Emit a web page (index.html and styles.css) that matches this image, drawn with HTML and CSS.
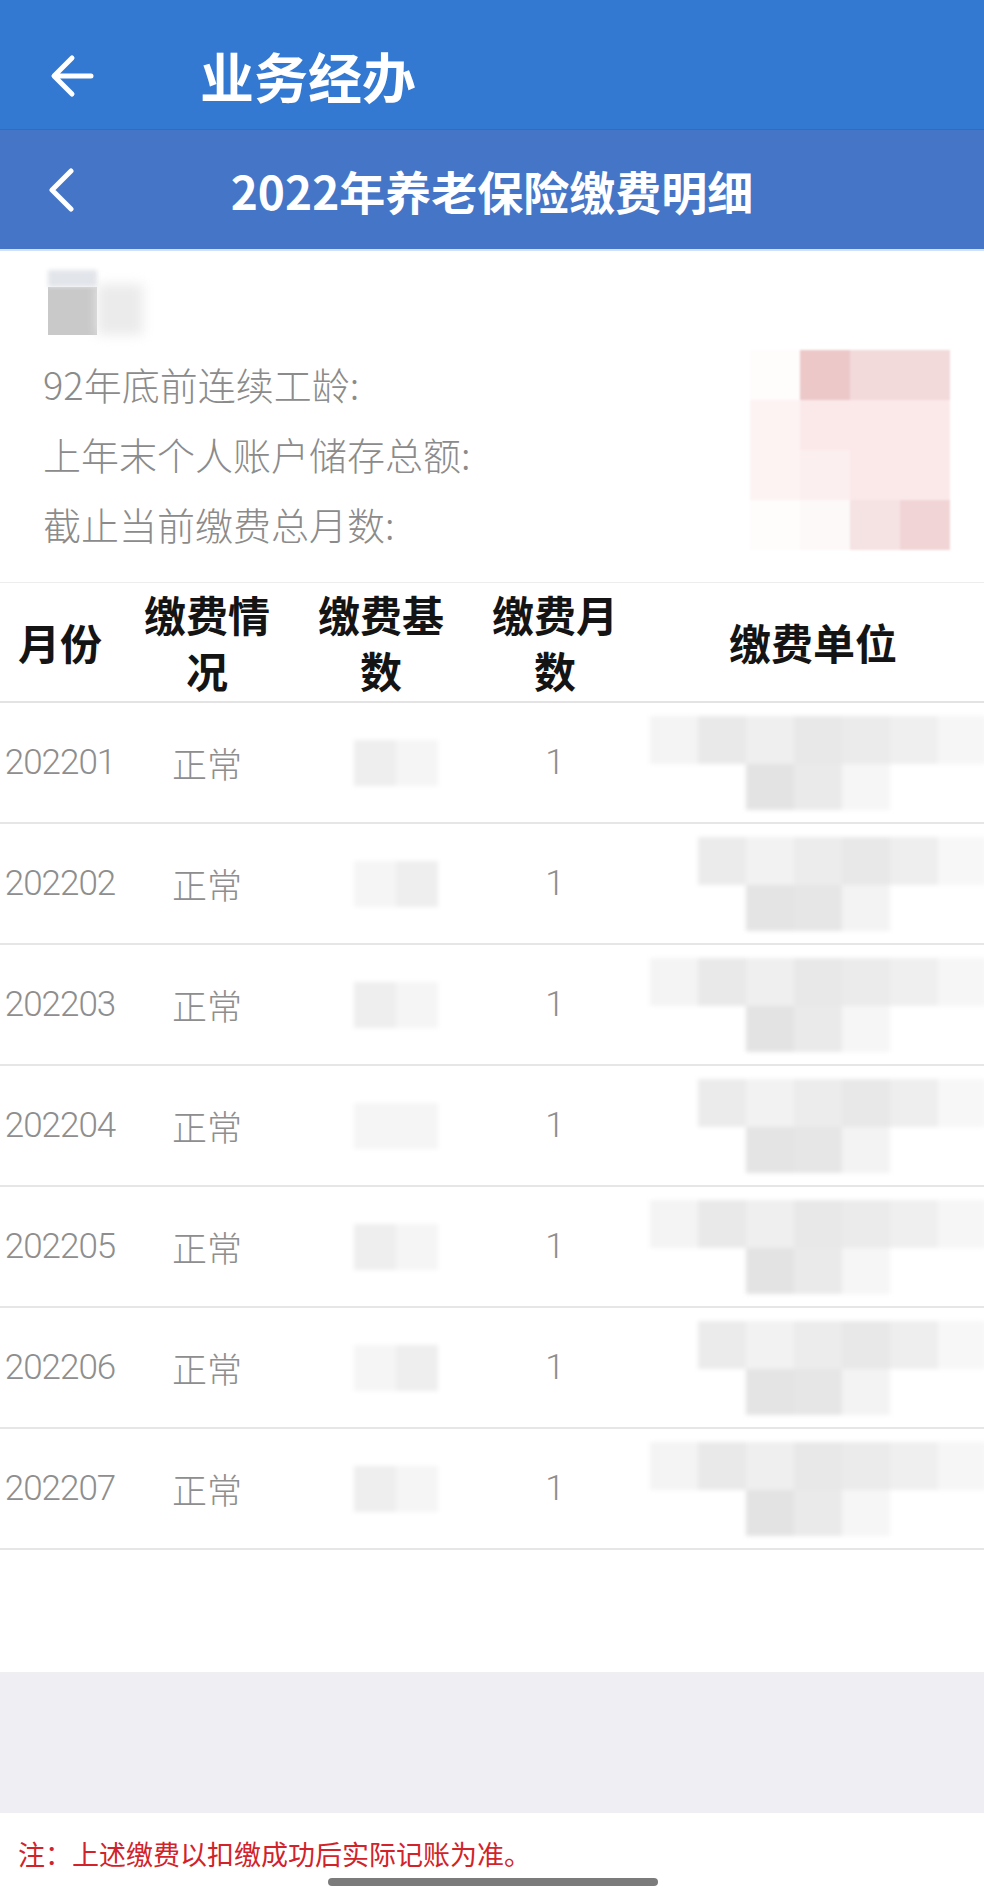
FILE: index.html
```html
<!DOCTYPE html>
<html lang="zh-CN">
<head>
<meta charset="utf-8">
<title>2022年养老保险缴费明细</title>
<link rel="stylesheet" href="styles.css">
</head>
<body>
<div class="page">
  <header class="appbar">
    <svg class="back-arrow" viewBox="0 0 44 44" width="44" height="44">
      <path d="M41 22 H5 M22 4 L4 22 L22 40" fill="none" stroke="#fff" stroke-width="5" stroke-linecap="round" stroke-linejoin="round"/>
    </svg>
    <h1 class="app-title">业务经办</h1>
  </header>

  <div class="subbar">
    <svg class="chevron" viewBox="0 0 26 44" width="26" height="44">
      <path d="M23 3 L4 22 L23 41" fill="none" stroke="#fff" stroke-width="5" stroke-linecap="round" stroke-linejoin="round"/>
    </svg>
    <div class="sub-title">2022年养老保险缴费明细</div>
    <div></div>
  </div>

  <section class="info">
    <div class="info-left">
      <div class="name-blur">
        <span class="nb nb-top"></span>
        <span class="nb nb-side"></span>
        <span class="nb nb-main"></span>
      </div>
      <div class="info-line">92年底前连续工龄:</div>
      <div class="info-line">上年末个人账户储存总额:</div>
      <div class="info-line">截止当前缴费总月数:</div>
    </div>
    <div class="pink-mosaic">
      <span class="pk pk0"></span><span class="pk pk1"></span><span class="pk pk2"></span><span class="pk pk2"></span>
      <span class="pk pk3"></span><span class="pk pk4"></span><span class="pk pk4"></span><span class="pk pk4"></span>
      <span class="pk pk3"></span><span class="pk pk5"></span><span class="pk pk4"></span><span class="pk pk4"></span>
      <span class="pk pk0"></span><span class="pk pk6"></span><span class="pk pk7"></span><span class="pk pk1b"></span>
    </div>
  </section>

  <div class="grid-row head">
    <div class="hc">月份</div>
    <div class="hc">缴费情况</div>
    <div class="hc">缴费基数</div>
    <div class="hc">缴费月数</div>
    <div class="hc">缴费单位</div>
  </div>

  <div class="grid-row data">
    <div class="ym">202201</div><div class="st">正常</div>
    <div class="base-blur"><span class="bb bb1"></span><span class="bb bb2"></span></div>
    <div class="cnt">1</div>
    <div class="unit-blur va"><span></span><span></span><span></span><span></span><span></span><span></span><span></span><span class="e"></span><span class="e"></span><span></span><span></span><span></span><span class="e"></span><span class="e"></span></div>
  </div>
  <div class="grid-row data">
    <div class="ym">202202</div><div class="st">正常</div>
    <div class="base-blur"><span class="bb bb2"></span><span class="bb bb1"></span></div>
    <div class="cnt">1</div>
    <div class="unit-blur vb"><span class="e"></span><span></span><span></span><span></span><span></span><span></span><span></span><span class="e"></span><span class="e"></span><span></span><span></span><span></span><span class="e"></span><span class="e"></span></div>
  </div>
  <div class="grid-row data">
    <div class="ym">202203</div><div class="st">正常</div>
    <div class="base-blur"><span class="bb bb1"></span><span class="bb bb2"></span></div>
    <div class="cnt">1</div>
    <div class="unit-blur va"><span></span><span></span><span></span><span></span><span></span><span></span><span></span><span class="e"></span><span class="e"></span><span></span><span></span><span></span><span class="e"></span><span class="e"></span></div>
  </div>
  <div class="grid-row data">
    <div class="ym">202204</div><div class="st">正常</div>
    <div class="base-blur"><span class="bb bb2"></span><span class="bb bb2"></span></div>
    <div class="cnt">1</div>
    <div class="unit-blur vb"><span class="e"></span><span></span><span></span><span></span><span></span><span></span><span></span><span class="e"></span><span class="e"></span><span></span><span></span><span></span><span class="e"></span><span class="e"></span></div>
  </div>
  <div class="grid-row data">
    <div class="ym">202205</div><div class="st">正常</div>
    <div class="base-blur"><span class="bb bb1"></span><span class="bb bb2"></span></div>
    <div class="cnt">1</div>
    <div class="unit-blur va"><span class="e"></span><span></span><span></span><span></span><span></span><span></span><span></span><span class="e"></span><span class="e"></span><span></span><span></span><span></span><span class="e"></span><span class="e"></span></div>
  </div>
  <div class="grid-row data">
    <div class="ym">202206</div><div class="st">正常</div>
    <div class="base-blur"><span class="bb bb2"></span><span class="bb bb1"></span></div>
    <div class="cnt">1</div>
    <div class="unit-blur vb"><span class="e"></span><span></span><span></span><span></span><span></span><span></span><span></span><span class="e"></span><span class="e"></span><span></span><span></span><span></span><span class="e"></span><span class="e"></span></div>
  </div>
  <div class="grid-row data">
    <div class="ym">202207</div><div class="st">正常</div>
    <div class="base-blur"><span class="bb bb1"></span><span class="bb bb2"></span></div>
    <div class="cnt">1</div>
    <div class="unit-blur va"><span class="e"></span><span></span><span></span><span></span><span></span><span></span><span></span><span class="e"></span><span class="e"></span><span></span><span></span><span></span><span class="e"></span><span class="e"></span></div>
  </div>

  <div class="spacer"></div>
  <div class="gray-band"></div>

  <footer class="footer">
    <p class="note">注：上述缴费以扣缴成功后实际记账为准。</p>
    <div class="home-bar"></div>
  </footer>
</div>
</body>
</html>
```

FILE: styles.css
```css
* { box-sizing: border-box; }

html, body {
  margin: 0;
  padding: 0;
  background: #ffffff;
}

body {
  font-family: "Noto Sans CJK SC", "Noto Sans", sans-serif;
  width: 984px;
}

.page {
  width: 984px;
  height: 1892px;
  overflow: hidden;
  display: flex;
  flex-direction: column;
}

/* ---------- top app bar ---------- */
.appbar {
  height: 130px;
  flex: none;
  background: #3378d1;
  display: flex;
  align-items: center;
  padding: 22px 0 0 50px;
  border-bottom: 1px solid #2f6dc2;
}

.back-arrow {
  display: block;
  flex: none;
}

.app-title {
  margin: 0 0 0 106px;
  font-size: 54px;
  font-weight: 700;
  color: #ffffff;
  line-height: 1;
  letter-spacing: 0;
}

/* ---------- sub bar ---------- */
.subbar {
  height: 121px;
  flex: none;
  background: #4575c7;
  border-bottom: 2px solid #d3e2f6;
  display: grid;
  grid-template-columns: 1fr auto 1fr;
  align-items: center;
  padding: 0 0 0 48px;
}

.chevron { display: block; }

.sub-title {
  font-size: 46px;
  font-weight: 700;
  color: #ffffff;
  line-height: 1;
  text-align: center;
  margin-left: -48px;
}

/* ---------- info ---------- */
.info {
  height: 331px;
  flex: none;
  display: flex;
  justify-content: space-between;
  padding: 17px 34px 0 43px;
}

.info-left {
  display: flex;
  flex-direction: column;
}

.name-blur {
  width: 100px;
  height: 81px;
  margin-left: 5px;
  display: grid;
  grid-template-columns: 49px 46px;
  grid-template-rows: 17px 48px;
  padding-top: 2px;
}

.nb { display: block; }
.nb-top { background: #e2e5ea; filter: blur(2px); }
.nb-side { grid-row: 1 / 3; grid-column: 2; background: #ebebeb; filter: blur(6px); margin-top: 14px; }
.nb-main { grid-row: 2; grid-column: 1; background: #c9c9c9; }

.info-line {
  font-size: 38px;
  line-height: 70px;
  height: 70px;
  color: #8b8b8b;
  font-weight: 300;
  white-space: nowrap;
}

.pink-mosaic {
  margin-top: 82px;
  display: grid;
  grid-template-columns: repeat(4, 50px);
  grid-template-rows: repeat(4, 50px);
  align-self: flex-start;
  filter: blur(1px);
}

.pk { display: block; }
.pk0 { background: #fffcfc; }
.pk1 { background: #ecc8c9; }
.pk1b { background: #f1d5d6; }
.pk2 { background: #f2d9da; }
.pk3 { background: #fdf3f3; }
.pk4 { background: #fbe9ea; }
.pk5 { background: #fcefef; }
.pk6 { background: #fdf9f9; }
.pk7 { background: #f5e2e3; }

/* ---------- table ---------- */
.grid-row {
  display: grid;
  grid-template-columns: 120px 174px 174px 174px 1fr;
  align-items: center;
  justify-items: center;
  height: 121px;
  flex: none;
  border-bottom: 2px solid #e6e6e6;
}

.head {
  border-top: 1px solid #ededed;
  border-bottom: 2px solid #e3e3e3;
}

.hc {
  font-size: 42px;
  line-height: 56px;
  font-weight: 700;
  color: #141414;
  text-align: center;
  padding: 0 8px;
  width: 100%;
}

.ym {
  font-family: Roboto, "Noto Sans", sans-serif;
  font-size: 35px;
  letter-spacing: -1px;
  color: #8e8e8e;
  font-weight: 300;
}

.st {
  font-size: 35px;
  color: #8e8e8e;
  font-weight: 300;
}

.cnt {
  font-family: Roboto, "Noto Sans", sans-serif;
  font-size: 35px;
  color: #8e8e8e;
  font-weight: 300;
}

.base-blur {
  display: flex;
  margin-left: 30px;
  filter: blur(2px);
}

.bb { display: block; width: 42px; height: 46px; }
.bb1 { background: #eeeeee; }
.bb2 { background: #f5f5f5; }

.unit-blur {
  justify-self: end;
  display: grid;
  grid-template-columns: repeat(7, 48px);
  grid-template-rows: 48px 46px;
  filter: blur(2px);
  margin-right: -2px;
}

.unit-blur span { display: block; background: #ededed; }
.unit-blur span.e { background: transparent; }
.va span:nth-child(1) { background: #f4f4f4; }
.va span:nth-child(2) { background: #e9e9e9; }
.va span:nth-child(3) { background: #efefef; }
.va span:nth-child(4) { background: #e8e8e8; }
.va span:nth-child(5) { background: #ebebeb; }
.va span:nth-child(6) { background: #efefef; }
.va span:nth-child(7) { background: #f6f6f6; }
.va span:nth-child(10) { background: #e3e3e3; }
.va span:nth-child(11) { background: #eaeaea; }
.va span:nth-child(12) { background: #f6f6f6; }

.vb span:nth-child(2) { background: #ebebeb; }
.vb span:nth-child(3) { background: #f2f2f2; }
.vb span:nth-child(4) { background: #ececec; }
.vb span:nth-child(5) { background: #e8e8e8; }
.vb span:nth-child(6) { background: #eeeeee; }
.vb span:nth-child(7) { background: #f7f7f7; }
.vb span:nth-child(10) { background: #e4e4e4; }
.vb span:nth-child(11) { background: #e6e6e6; }
.vb span:nth-child(12) { background: #f3f3f3; }

/* ---------- bottom ---------- */
.spacer {
  height: 122px;
  flex: none;
}

.gray-band {
  height: 141px;
  flex: none;
  background: #efeff3;
}

.footer {
  flex: 1;
  padding: 26px 0 0 18px;
  display: flex;
  flex-direction: column;
}

.note {
  margin: 0;
  font-size: 27px;
  line-height: 30px;
  color: #d2232a;
  white-space: nowrap;
}

.home-bar {
  width: 330px;
  height: 8px;
  border-radius: 4px;
  background: #7b7b7b;
  margin: 9px 0 0 310px;
}
```
